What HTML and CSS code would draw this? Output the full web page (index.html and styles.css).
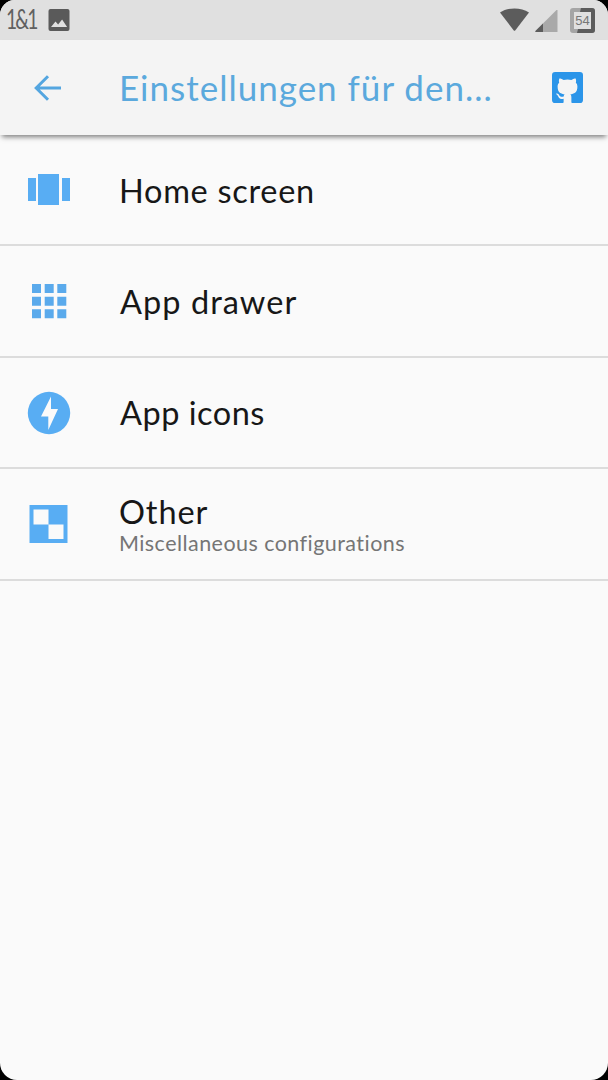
FILE: index.html
```html
<!DOCTYPE html>
<html lang="de">
<head>
<meta charset="utf-8">
<title>Einstellungen</title>
<link rel="stylesheet" href="styles.css">
</head>
<body>
<div class="screen">
  <div class="status">
    <span class="carrier">1&amp;1</span>
    <svg class="picture" viewBox="0 0 21 22"><rect width="21" height="22" rx="2" fill="#5a5a5a"/><path d="M2.5 18 7 12.5l2.6 3 4-5 5 7.5z" fill="#e0e0e0"/></svg>
    <div class="indicators">
      <svg width="29" height="24" viewBox="0 0 29 24"><path d="M0 4.5C8-1 21-1 29 4.5L15.4 22.3q-.9 1.1-1.8 0z" fill="#5c5c5c"/></svg>
      <svg class="signal" width="23" height="23" viewBox="0 0 23 23"><path d="M21.500 0q1-.8 1 .6V22H1q-1.400 0-.3-1.200z" fill="#a9a9a9"/><path d="M8 13.500V22H1q-1.400 0-.3-1.200z" fill="#5c5c5c"/></svg>
      <div class="battery">
        <svg width="25" height="25" viewBox="0 0 25 25"><rect x="2" y="2" width="21" height="21" rx="1" fill="none" stroke="#a5a5a5" stroke-width="4"/><path d="M11 0h11q3 0 3 3v19q0 3-3 3H7l1-4h13V4H10z" fill="#5c5c5c"/></svg>
        <span>54</span>
      </div>
    </div>
  </div>
  <header class="appbar">
    <svg class="back" width="28" height="26" viewBox="0 0 28 26" fill="none" stroke="#54a6e0" stroke-width="3"><path d="M27 13H3M14 1.200 2.200 13 14 24.800"/></svg>
    <h1>Einstellungen für den...</h1>
    <svg class="github" width="31" height="31" viewBox="2 2 20 20"><path fill="#2b95e9" d="M4,2H20A2,2 0 0,1 22,4V20A2,2 0 0,1 20,22H14.85C14.5,21.92 14.5,21.24 14.5,21V18.26C14.5,17.33 14.17,16.72 13.81,16.41C16.04,16.16 18.38,15.32 18.38,11.5C18.38,10.39 18,9.5 17.35,8.79C17.45,8.54 17.8,7.5 17.25,6.15C17.25,6.15 16.41,5.88 14.5,7.17C13.71,6.95 12.85,6.84 12,6.84C11.15,6.84 10.29,6.95 9.5,7.17C7.59,5.88 6.75,6.15 6.75,6.15C6.2,7.5 6.55,8.54 6.65,8.79C6,9.5 5.62,10.39 5.62,11.5C5.62,15.31 7.95,16.17 10.17,16.42C9.89,16.67 9.63,17.11 9.54,17.76C8.97,18 7.5,18.45 6.63,16.93C6.63,16.93 6.1,15.97 5.1,15.9C5.1,15.9 4.12,15.88 5,16.5C5,16.5 5.68,16.81 6.14,17.97C6.14,17.97 6.73,19.91 9.5,19.31V21C9.5,21.24 9.5,21.92 9.14,22H4A2,2 0 0,1 2,20V4A2,2 0 0,1 4,2Z"/></svg>
  </header>
  <main class="list">
    <div class="row">
      <svg class="icon" viewBox="0 0 44 44" fill="#58adf3"><path d="M1 10h8v23H1zM11 6h21v31H11zM35 10h8v23h-8z"/></svg>
      <div class="label home">Home screen</div>
    </div>
    <div class="row">
      <svg class="icon" viewBox="0 0 44 44" fill="#5aaaec"><path d="M5 5h9v9H5zM17.700 5h9v9h-9zM30.300 5h9v9h-9zM5 17.700h9v9H5zM17.700 17.700h9v9h-9zM30.300 17.700h9v9h-9zM5 30.300h9v9H5zM17.700 30.300h9v9h-9zM30.300 30.300h9v9h-9z"/></svg>
      <div class="label drawer">App drawer</div>
    </div>
    <div class="row">
      <svg class="icon" viewBox="0 0 44 44"><circle cx="22" cy="22" r="21.200" fill="#58adf3"/><path d="M24 5.500V18h7L21.300 39V25.500H14z" fill="#fafafa"/></svg>
      <div class="label icons">App icons</div>
    </div>
    <div class="row">
      <svg class="icon" viewBox="0 0 44 44"><path d="M2.500 3h38v38h-38z" fill="#58adf3"/><path d="M6.500 7.500h15v15h15V37h-15V22.500h-15z" fill="#fafafa"/></svg>
      <div class="texts">
        <div class="label other">Other</div>
        <div class="sub">Miscellaneous configurations</div>
      </div>
    </div>
  </main>
</div>
</body>
</html>
```
FILE: styles.css
```css
body {
  margin: 0;
  background: #000;
  font-family: Lato, "Liberation Sans", sans-serif;
}
.screen {
  height: 1080px;
  background: #fafafa;
  border-radius: 15px 15px 17px 17px;
  overflow: hidden;
  display: flex;
  flex-direction: column;
}
.status {
  height: 40px;
  flex: none;
  box-sizing: border-box;
  padding: 0 13px 0 6px;
  background: #e0e0e0;
  display: flex;
  align-items: center;
}
.carrier {
  width: 42px;
  font-size: 26px;
  line-height: 38px;
  padding-bottom: 2px;
  letter-spacing: -2.5px;
  color: #606060;
  white-space: nowrap;
  transform: scaleX(0.74);
  transform-origin: left;
}
.picture {
  width: 22px;
  height: 22px;
}
.indicators {
  margin-left: auto;
  display: flex;
  align-items: center;
}
.signal {
  margin: 2px 12px 0 6px;
}
.battery {
  display: grid;
  place-items: center;
  font-family: "Liberation Sans", sans-serif;
  font-size: 13px;
  color: #777;
}
.battery > * {
  grid-area: 1 / 1;
}
.appbar {
  height: 95px;
  flex: none;
  box-sizing: border-box;
  padding: 0 25px 0 34px;
  display: flex;
  align-items: center;
  background: #f4f4f4;
  box-shadow: 0 4px 5px -2px rgba(0, 0, 0, 0.5);
}
h1 {
  margin: 0 auto 2px 57px;
  font-size: 35px;
  line-height: 44px;
  font-weight: 400;
  white-space: nowrap;
  color: #5ba9dd;
  letter-spacing: 1px;
}
.row {
  height: 111.5px;
  box-sizing: border-box;
  padding: 1px 0 0 27px;
  display: flex;
  align-items: center;
  gap: 48px;
  border-bottom: 2px solid #dcdcdc;
}
.row:first-child {
  height: 111px;
  padding-top: 0;
}
.icon {
  width: 44px;
  height: 44px;
  flex: none;
}
.label {
  font-size: 32.5px;
  line-height: 40px;
  white-space: nowrap;
  color: #171717;
}
.home {
  padding-top: 2px;
  letter-spacing: 0.7px;
}
.drawer {
  padding-top: 1px;
  margin-left: 1px;
  letter-spacing: 1.05px;
}
.icons {
  padding-top: 1px;
  margin-left: 1px;
  letter-spacing: 0.5px;
}
.texts {
  padding-top: 4px;
}
.texts .label {
  line-height: 34px;
  letter-spacing: 0.9px;
}
.sub {
  font-size: 21.5px;
  line-height: 28px;
  color: #757575;
  white-space: nowrap;
  font-variant-ligatures: none;
  letter-spacing: 0.45px;
}
```
